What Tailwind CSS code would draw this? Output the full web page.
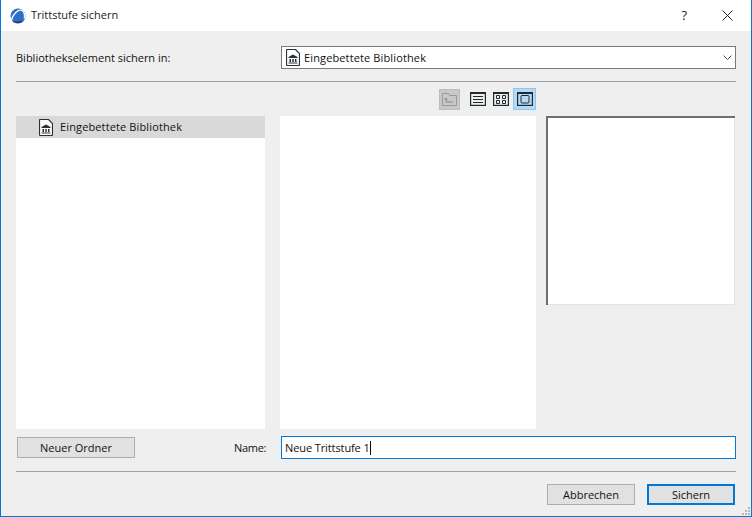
<!DOCTYPE html>
<html><head><meta charset="utf-8">
<script src="https://cdn.jsdelivr.net/npm/@tailwindcss/browser@4"></script>
</head>
<body class="m-0 overflow-hidden">
<div class="w-[752px] h-[517px] flex flex-col border border-t-0 border-[#0078d7] bg-[#efefef] font-['Open_Sans','Noto_Sans',sans-serif] text-[11px] text-[#111] relative">
  <div class="h-[31px] bg-white flex items-center shrink-0">
    <svg class="ml-[9px] w-[16px] h-[16px]" viewBox="0 0 16 16"><circle cx="8" cy="8" r="7.5" fill="#2f6fc4"/><path d="M1.500 12C3 6 8 1 12 2.500c2 1 2.800 4 2.300 8" fill="none" stroke="#fff" stroke-width="1.300"/><path d="M2.500 13.500c2 2 8 2.500 10.500-.5-3 0-7 1-10.500.5z" fill="#1c3f7d"/></svg>
    <span class="ml-[5px] text-[#222]">Trittstufe sichern</span>
    <span class="ml-auto mr-[35px] text-[13px] text-[#222]">?</span>
    <svg class="mr-[18px] w-[11px] h-[11px]" viewBox="0 0 11 11"><path d="M.5.5l10 10M10.500.5l-10 10" stroke="#222" stroke-width="1" fill="none"/></svg>
  </div>
  <div class="flex-1 flex flex-col pl-[15px] pr-[15px]">
    <div class="mt-[15px] h-[23px] flex items-center">
      <span class="w-[265px] pt-px">Bibliothekselement sichern in:</span>
      <div class="w-[455px] h-[23px] bg-white border border-[#7a7a7a] flex items-center pl-[4px]">
        <svg class="w-[14px] h-[17px]" viewBox="0 0 14 17"><path d="M1 .5h8.500l4 4v11a1 1 0 0 1-1 1h-11a1 1 0 0 1-1-1v-14.500a.5.5 0 0 1 .5-.5z" fill="#fff" stroke="#263238" stroke-width="1.200"/><path d="M7 5.500l4.500 2.500v1h-9v-1zM3.500 10h1.500v3H3.500zM6.250 10h1.500v3h-1.500zM9 10h1.500v3H9zM2.500 13.500h9v1h-9z" fill="#263238"/></svg>
        <span class="ml-[4px] pt-px tracking-[0.13px]">Eingebettete Bibliothek</span>
        <svg class="ml-auto mr-[3px] w-[9px] h-[5px]" viewBox="0 0 9 5"><path d="M.5.5L4.500 4.500 8.500.5" fill="none" stroke="#555"/></svg>
      </div>
    </div>
    <div class="mt-[12px] h-px bg-[#a0a0a0] w-[720px]"></div>
    <div class="mt-[6px] h-[22px] flex items-center pl-[423px]">
      <div class="w-[21px] h-[21px] bg-[#c8c8c8] border border-[#bdbdbd] flex items-center justify-center">
        <svg class="w-[15px] h-[13px]" viewBox="0 0 15 13"><path d="M.5 12.500V.5h6l1 2h7v10z" fill="none" stroke="#9a9a9a"/><path d="M4 5v4h7M2.500 6.500L4 5l1.500 1.500" fill="none" stroke="#8a8a8a"/></svg>
      </div>
      <svg class="ml-[10px] w-[16px] h-[14px]" viewBox="0 0 16 14"><rect x=".6" y=".6" width="14.800" height="12.800" fill="none" stroke="#1f2a30" stroke-width="1.200"/><path d="M0 1h16" stroke="#1f2a30" stroke-width="2"/><path d="M3 4.500h10M3 7.500h10M3 10.500h10" stroke="#1f2a30"/></svg>
      <svg class="ml-[7px] w-[16px] h-[14px]" viewBox="0 0 16 14"><rect x=".6" y=".6" width="14.800" height="12.800" fill="none" stroke="#1f2a30" stroke-width="1.200"/><path d="M0 1h16" stroke="#1f2a30" stroke-width="2"/><path d="M3.500 3.500h3v3h-3zM9.500 3.500h3v3h-3zM3.500 8.500h3v3h-3zM9.500 8.500h3v3h-3z" fill="none" stroke="#1f2a30"/></svg>
      <div class="ml-[4px] w-[23px] h-[22px] bg-[#b5d8f7] border border-[#90c6f2] flex items-center justify-center">
        <svg class="w-[16px] h-[14px]" viewBox="0 0 16 14"><rect x=".6" y=".6" width="14.800" height="12.800" fill="none" stroke="#1f2a30" stroke-width="1.200"/><path d="M0 1h16" stroke="#1f2a30" stroke-width="2"/><rect x="4" y="3.500" width="8" height="7.500" rx="1" fill="none" stroke="#1f2a30"/></svg>
      </div>
    </div>
    <div class="mt-[6px] h-[313px] flex items-start">
      <div class="w-[249px] h-full bg-white">
        <div class="h-[22px] bg-[#d9d9d9] flex items-center pl-[23px]">
          <svg class="w-[14px] h-[17px]" viewBox="0 0 14 17"><path d="M1 .5h8.500l4 4v11a1 1 0 0 1-1 1h-11a1 1 0 0 1-1-1v-14.500a.5.5 0 0 1 .5-.5z" fill="#fff" stroke="#263238" stroke-width="1.200"/><path d="M7 5.500l4.500 2.500v1h-9v-1zM3.500 10h1.500v3H3.500zM6.250 10h1.500v3h-1.500zM9 10h1.500v3H9zM2.500 13.500h9v1h-9z" fill="#263238"/></svg>
          <span class="ml-[7px] tracking-[0.13px]">Eingebettete Bibliothek</span>
        </div>
      </div>
      <div class="ml-[15px] w-[256px] h-full bg-white"></div>
      <div class="ml-[10px] w-[189px] h-[189px] bg-white border-2 border-r-0 border-b-0 border-[#6f6f6f] shadow-[inset_-1px_-1px_0_#e3e3e3]"></div>
    </div>
    <div class="mt-[7px] h-[23px] flex items-center">
      <button class="ml-px w-[118px] h-[21px] pt-px bg-[#e1e1e1] border border-[#adadad] text-center">Neuer Ordner</button>
      <span class="ml-[99px] w-[32px] pt-px tracking-[-0.3px]">Name:</span>
      <div class="ml-[15px] w-[455px] h-[23px] bg-white border border-[#0078d7] flex items-center pl-[3px]">
        <span class="pt-px tracking-[-0.1px]">Neue Trittstufe 1</span><span class="w-px h-[14px] bg-black"></span>
      </div>
    </div>
    <div class="mt-[12px] h-px bg-[#a0a0a0] w-[720px]"></div>
    <div class="mt-[12px] flex justify-end pr-[1px] w-[720px] gap-[12px]">
      <button class="w-[88px] h-[21px] pt-px bg-[#e1e1e1] border border-[#adadad]">Abbrechen</button>
      <button class="w-[88px] h-[21px] pt-px bg-[#e1e1e1] border-2 border-[#0078d7]">Sichern</button>
    </div>
  </div>
  <svg class="absolute right-0 bottom-0 w-[10px] h-[10px]" viewBox="0 0 10 10"><path d="M7 1h2v2H7zM4 4h2v2H4zM7 4h2v2H7zM1 7h2v2H1zM4 7h2v2H4zM7 7h2v2H7z" fill="#b8b8b8"/></svg>
</div>
</body></html>
